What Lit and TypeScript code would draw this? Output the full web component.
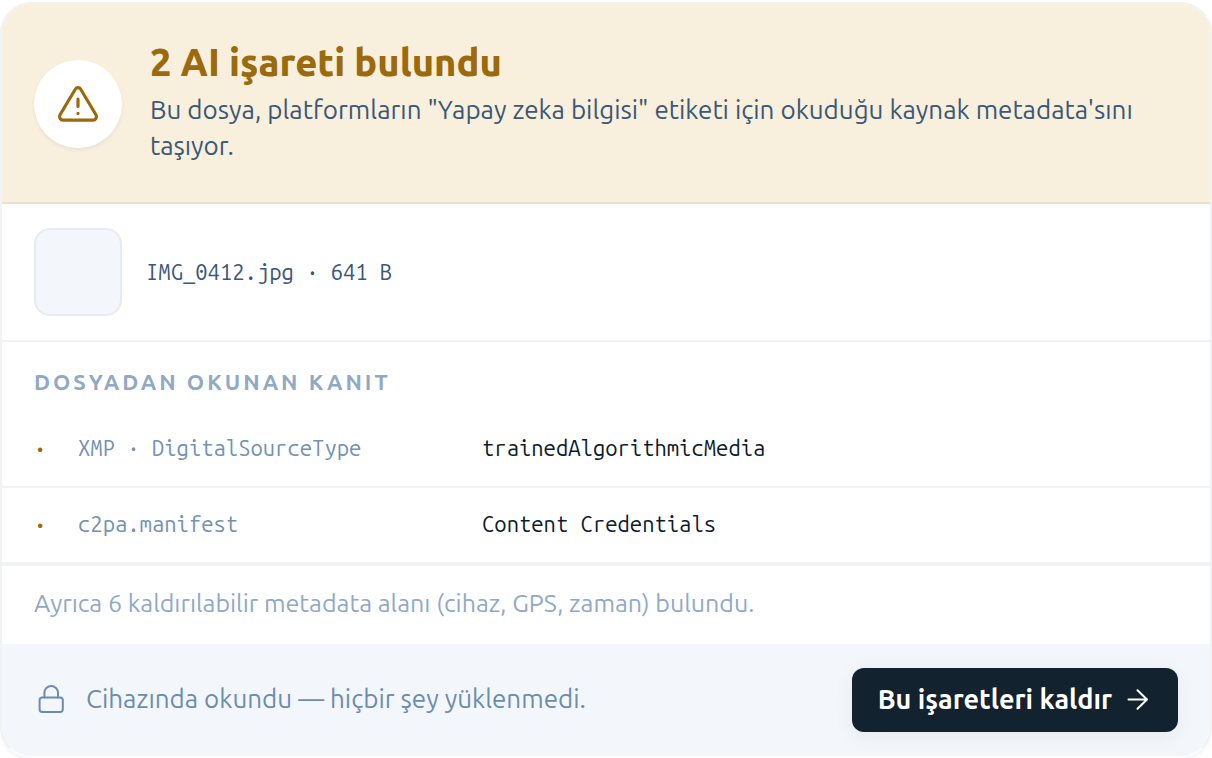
import { LitElement, html, css } from "lit";
import { customElement } from "lit/decorators.js";

interface Evidence {
  key: string;
  value: string;
}

const EVIDENCE: Evidence[] = [
  { key: "XMP · DigitalSourceType", value: "trainedAlgorithmicMedia" },
  { key: "c2pa.manifest", value: "Content Credentials" },
];

@customElement("app-root")
export class AppRoot extends LitElement {
  static styles = css`
    :host {
      display: block;
      box-sizing: border-box;
      padding-top: 2px;
      background: #fff;
      color: #0b1c2c;
      font-family: Ubuntu, "Noto Sans", "Open Sans", sans-serif;
      font-size: 26px;
      --mono: "Ubuntu Mono", "DejaVu Sans Mono", "Liberation Mono", monospace;
      --line: #f0f2f3;
      --amber: #9a6a0c;
    }
    * {
      box-sizing: border-box;
    }
    h2, h3, p, dl, dd, dt {
      margin: 0;
    }
    .card {
      border: 2px solid var(--line);
      border-bottom-color: #fbfcfe;
      border-radius: 32px;
      overflow: hidden;
      background: #fff;
      box-shadow: 0 2px 4px rgba(16, 34, 48, 0.05);
    }
    .verdict {
      display: flex;
      align-items: center;
      gap: 28px;
      padding: 40px 32px;
      background: #f8efdc;
      box-shadow: inset 0 -2px #ebe2d0;
    }
    .badge {
      display: grid;
      place-items: center;
      flex: none;
      width: 88px;
      height: 88px;
      border-radius: 50%;
      background: #fff;
      color: var(--amber);
      box-shadow: 0 2px 4px rgba(16, 34, 48, 0.06);
    }
    .title {
      padding-bottom: 12px;
      font-size: 38px;
      line-height: 36px;
      font-weight: 800;
      color: var(--amber);
    }
    .lead {
      font-size: 26px;
      line-height: 36px;
      color: #3a5877;
    }
    .file {
      display: flex;
      align-items: center;
      gap: 24px;
      padding: 24px 32px;
      border-bottom: 2px solid var(--line);
    }
    .thumb {
      flex: none;
      width: 88px;
      height: 88px;
      border: 2px solid #e6ebef;
      border-radius: 16px;
      background: #f3f7fc;
    }
    .mono {
      font-family: var(--mono);
      font-size: 22px;
      line-height: 32px;
    }
    .name {
      color: #3a5877;
    }
    .heading {
      padding: 24px 32px 14px;
      font-size: 22px;
      line-height: 32px;
      font-weight: 700;
      letter-spacing: 3px;
      color: #8fa9c7;
    }
    .row {
      display: grid;
      grid-template-columns: 28px minmax(0, 388px) minmax(0, 1fr);
      column-gap: 16px;
      padding: 20px 32px 22px;
      border-bottom: 2px solid var(--line);
    }
    .dot {
      color: var(--amber);
      font-weight: 700;
    }
    .key {
      color: #7292b3;
    }
    .note {
      padding: 19px 32px 23px;
      border-top: 2px solid var(--line);
      font-size: 25px;
      line-height: 36px;
      color: #8fa9c7;
    }
    .footer {
      display: flex;
      align-items: center;
      justify-content: space-between;
      gap: 24px;
      padding: 24px 32px;
      background: #f3f7fc;
    }
    .local {
      display: flex;
      align-items: center;
      gap: 18px;
      font-size: 26px;
      line-height: 36px;
      color: #6c8cae;
    }
    .action {
      display: flex;
      align-items: center;
      flex: none;
      gap: 12px;
      height: 64px;
      padding: 0 26px;
      border: 0;
      border-radius: 12px;
      background: #13222f;
      color: #fff;
      font: inherit;
      font-size: 27px;
      font-weight: 600;
      cursor: pointer;
      box-shadow: 0 4px 20px rgba(16, 34, 48, 0.06);
    }
    .local span,
    .action span {
      padding-bottom: 2px;
    }
    svg {
      display: block;
      flex: none;
      fill: none;
      stroke: currentColor;
      stroke-linecap: round;
      stroke-linejoin: round;
    }
  `;

  render() {
    return html`
      <section class="card">
        <header class="verdict">
          <span class="badge">
            <svg width="44" height="44" viewBox="0 0 44 44" stroke-width="3.2" aria-hidden="true">
              <path d="M19.3 7.2 4.2 32.5a3.6 3.6 0 0 0 3.2 5.7h29.2a3.6 3.6 0 0 0 3.2-5.7L24.7 7.2a3.1 3.1 0 0 0-5.4 0Z" />
              <path d="M22 17.2v7.2M22 31.4h.02" />
            </svg>
          </span>
          <div>
            <h2 class="title">2 AI işareti bulundu</h2>
            <p class="lead">Bu dosya, platformların "Yapay zeka bilgisi" etiketi için okuduğu kaynak metadata'sını taşıyor.</p>
          </div>
        </header>
        <div class="file">
          <span class="thumb"></span>
          <span class="mono name">IMG_0412.jpg · 641 B</span>
        </div>
        <h3 class="heading">DOSYADAN OKUNAN KANIT</h3>
        <dl>
          ${EVIDENCE.map(
            (item) => html`
              <div class="row mono">
                <span class="dot" aria-hidden="true">·</span>
                <dt class="key">${item.key}</dt>
                <dd>${item.value}</dd>
              </div>
            `
          )}
        </dl>
        <p class="note">Ayrıca 6 kaldırılabilir metadata alanı (cihaz, GPS, zaman) bulundu.</p>
        <footer class="footer">
          <p class="local">
            <svg width="34" height="34" viewBox="0 0 34 34" stroke-width="2" aria-hidden="true">
              <rect x="5.6" y="14.5" width="23.2" height="14.4" rx="2.6" />
              <path d="M10.4 14.5V9.8a6.8 6.8 0 0 1 13.6 0v4.7" />
            </svg>
            <span>Cihazında okundu — hiçbir şey yüklenmedi.</span>
          </p>
          <button class="action" type="button">
            <span>Bu işaretleri kaldır</span>
            <svg width="28" height="28" viewBox="0 0 28 28" stroke-width="2" aria-hidden="true">
              <path d="M4.5 13.5h18.5M13.5 4.2l9.5 9.3-9.5 9.3" />
            </svg>
          </button>
        </footer>
      </section>
    `;
  }
}
